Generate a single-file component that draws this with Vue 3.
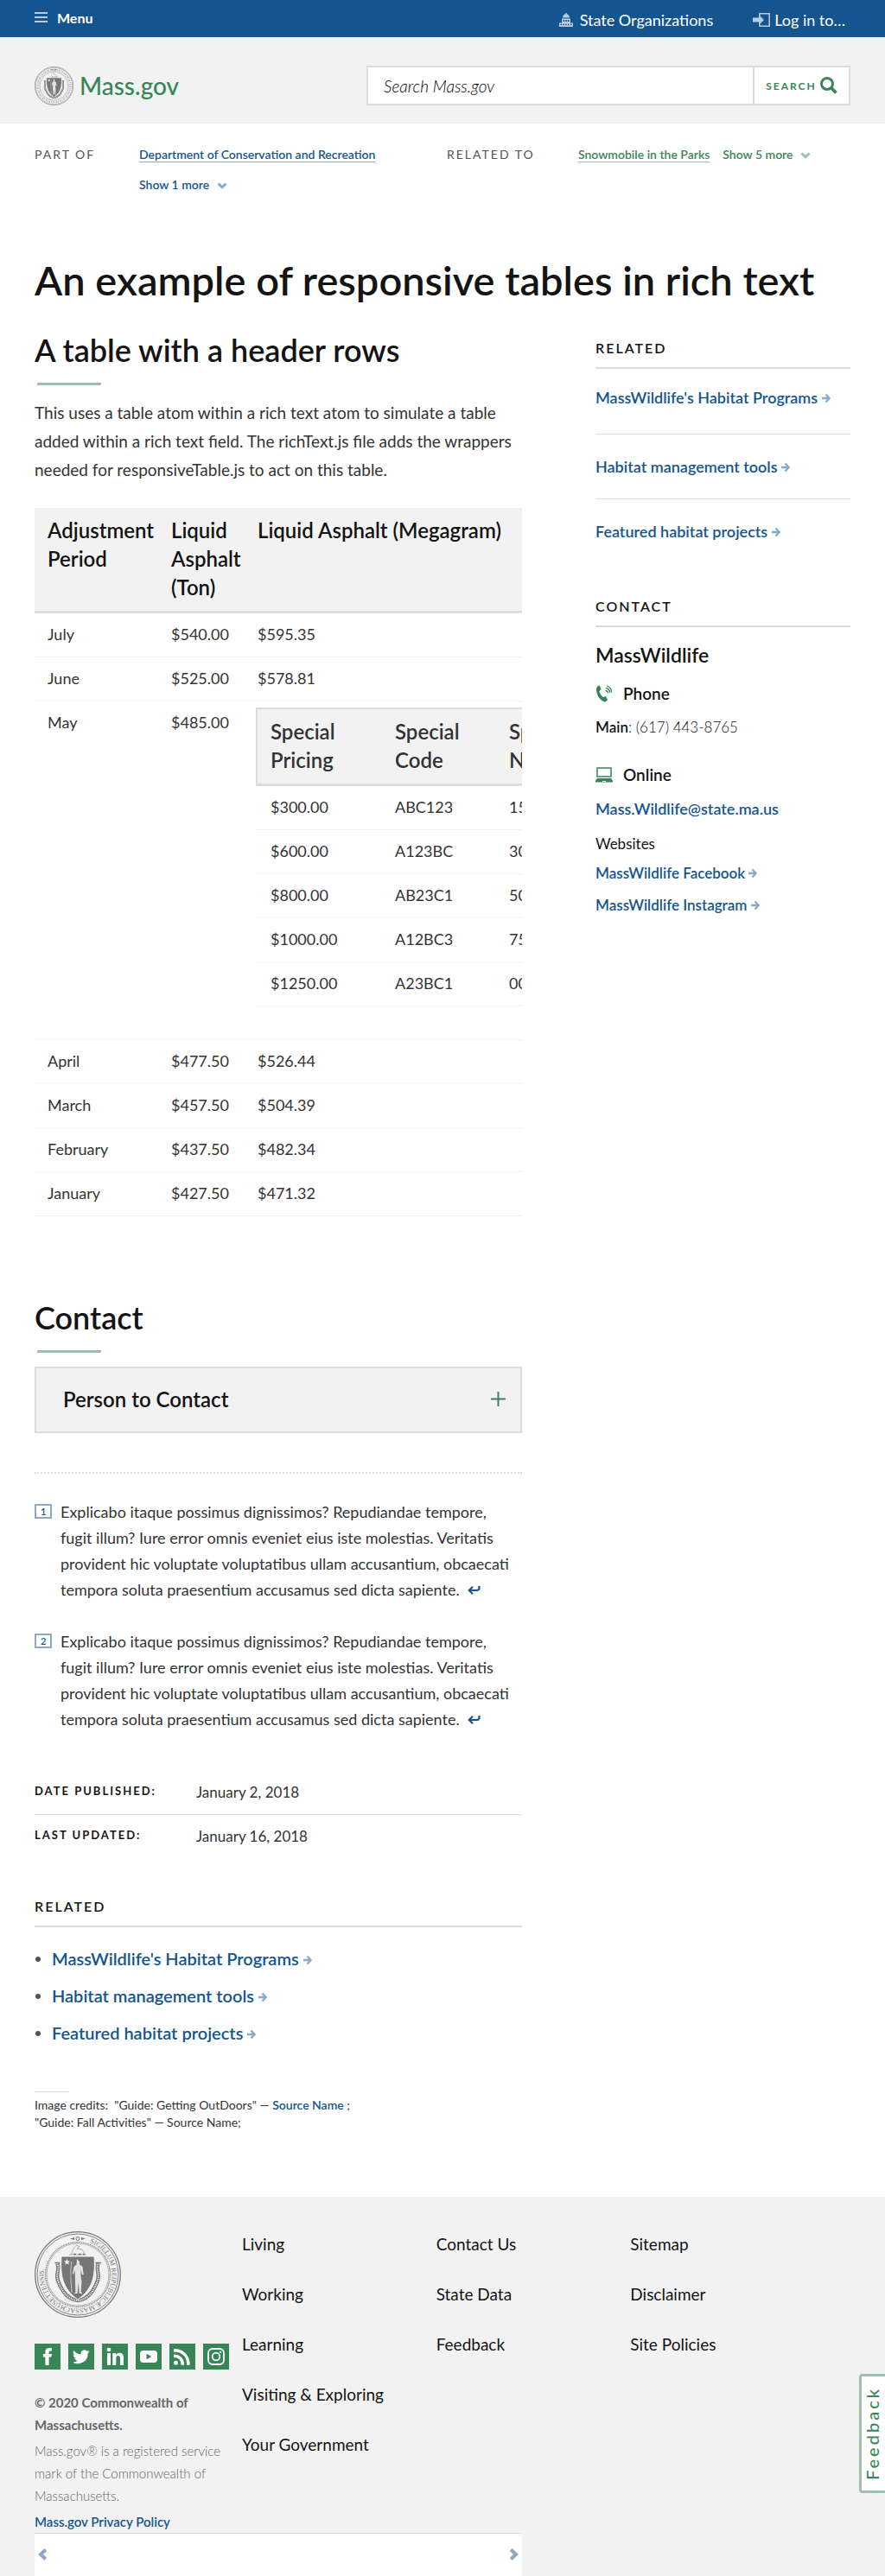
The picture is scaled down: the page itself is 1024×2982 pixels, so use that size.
<script setup>
const relatedLinks = ["MassWildlife's Habitat Programs", 'Habitat management tools', 'Featured habitat projects']
const websites = ['MassWildlife Facebook', 'MassWildlife Instagram']

const rowsBefore = [
  ['July', '$540.00', '$595.35'],
  ['June', '$525.00', '$578.81'],
]
const rowsAfter = [
  ['April', '$477.50', '$526.44'],
  ['March', '$457.50', '$504.39'],
  ['February', '$437.50', '$482.34'],
  ['January', '$427.50', '$471.32'],
]
const specials = [
  ['$300.00', 'ABC123', '15'],
  ['$600.00', 'A123BC', '30'],
  ['$800.00', 'AB23C1', '50'],
  ['$1000.00', 'A12BC3', '75'],
  ['$1250.00', 'A23BC1', '00'],
]
const footnotes = [1, 2]
const footerLinks = [
  ['Living', 'Working', 'Learning', 'Visiting & Exploring', 'Your Government'],
  ['Contact Us', 'State Data', 'Feedback'],
  ['Sitemap', 'Disclaimer', 'Site Policies'],
]
</script>

<template>
  <div class="page">
    <!-- Shared symbols -->
    <svg class="sprite" width="0" height="0" aria-hidden="true">
      <symbol id="seal" viewBox="0 0 100 100">
        <g fill="none" stroke="#777">
          <circle cx="50" cy="50" r="49.3" stroke-width="1.3" />
          <circle cx="50" cy="50" r="47" stroke-width=".9" />
          <circle cx="50" cy="50" r="37.4" stroke-width="1.2" stroke-dasharray="1 .7" />
          <circle cx="50" cy="50" r="36" stroke-width=".5" />
        </g>
        <path d="M41 8.500l5-1.600v3.200zM59 8.500l-5-1.600v3.200z" fill="#777" />
        <circle cx="50" cy="8.500" r="2" fill="none" stroke="#777" stroke-width="1" />
        <path d="M43 27c0-5 3-9 6-11l3 2-3 2c5 0 9 3 9 7M40 27h20" fill="none" stroke="#999" stroke-width=".8" />
        <path d="M45 26.500h3M51 26.500h3M56 26.500h2" stroke="#777" stroke-width="1.400" />
        <path d="M26 37c4 6-2 12 1 20s7 16 14 20c6 4 12 4 18 0 7-4 11-12 14-20s-3-14 1-20" fill="none" stroke="#777" stroke-width="4.400" />
        <path d="M26 37c4 6-2 12 1 20s7 16 14 20c6 4 12 4 18 0 7-4 11-12 14-20s-3-14 1-20" fill="none" stroke="#f2f2f2" stroke-width="2" stroke-dasharray="1.200 1" />
        <path d="M23.500 36.500h6M70.500 36.500h6.500" stroke="#777" stroke-width="1.400" />
        <path d="M31 29h38c1 18 1 36-19 50-20-14-20-32-19-50z" fill="#777" stroke="#f2f2f2" stroke-width="1" />
        <path d="M37.500 32l1 2.300 2.500.2-1.900 1.600.6 2.400-2.200-1.300-2.200 1.300.6-2.400-1.900-1.600 2.500-.2z" fill="#f2f2f2" />
        <path d="M49 32l2 2c1.500 1 1.500 3 .5 4l4 3 1.200 9-1.700.6-1.500-6v7l1 7-.8 12 2 1.500h-4l-.9-13-1.200 13h-4.200l2-1.500-.4-12-.3-14-1.500 5-1.200-.5 1.500-8 3-2.500z" fill="#e4e4e4" />
        <path d="M43 35c-2 8-1 24 0 36" fill="none" stroke="#d8d8d8" stroke-width=".8" />
      </symbol>
      <symbol id="arrow" viewBox="0 0 10 12">
        <path d="M0 6h8M4.500 1.500L8.700 6l-4.200 4.500" fill="none" stroke="currentColor" stroke-width="2.400" />
      </symbol>
      <symbol id="chevron" viewBox="0 0 12 8">
        <path d="M1.500 1.500L6 5.800l4.500-4.300" fill="none" stroke="currentColor" stroke-width="3" />
      </symbol>
    </svg>

    <div class="topbar">
      <button class="menu" type="button">
        <span class="bars" aria-hidden="true"></span>Menu
      </button>
      <nav class="utility" aria-label="Utility">
        <a href="#">
          <svg width="16" height="16" viewBox="0 0 16 16" aria-hidden="true">
            <path d="M7.300 0h1.400v1.300C10.800 1.700 12 3.300 12 5.600H4c0-2.300 1.200-3.900 3.300-4.300zM3 6.400h10v5h3V16H0v-4.600h3z" fill="#b7cce0" />
            <path d="M4.500 8.300h1.800v1.700H4.500zM7.100 8.300h1.800v1.700H7.100zM9.700 8.300h1.800v1.700H9.700zM1.500 12.800h1.500v1.500H1.500zM4.500 12.800h1.500v1.500H4.500zM7.250 12.800h1.500v1.500h-1.500zM10 12.800h1.500v1.500H10zM13 12.800h1.500v1.500H13z" fill="#14558f" />
          </svg>
          State Organizations
        </a>
        <button type="button">
          <svg width="20" height="16" viewBox="0 0 20 16" aria-hidden="true">
            <path d="M8 3V.8h11.200v14.400H8V13" fill="none" stroke="#b7cce0" stroke-width="1.500" />
            <path d="M0 5.500h7V2l6 6-6 6v-3.500H0z" fill="#b7cce0" />
          </svg>
          Log in to…
        </button>
      </nav>
    </div>

    <header class="header">
      <a class="brand" href="#">
        <svg width="45" height="45" viewBox="0 0 100 100" role="img" aria-label="Massachusetts State Seal">
          <use href="#seal" width="100" height="100" />
          <circle cx="50" cy="50" r="42" fill="none" stroke="#777" stroke-opacity=".55" stroke-width="4.500" stroke-dasharray="2.500 3 1.500 2.500" />
        </svg>
        <span>Mass.gov</span>
      </a>
      <form class="search" role="search" @submit.prevent>
        <input type="search" placeholder="Search Mass.gov" aria-label="Search Mass.gov" />
        <button type="submit">
          <span>Search</span>
          <svg width="20" height="20" viewBox="0 0 20 20" fill="none" stroke="#388557" aria-hidden="true">
            <circle cx="8" cy="8" r="6.500" stroke-width="3" />
            <path d="M12.500 12.500l6 6" stroke-width="3.800" />
          </svg>
        </button>
      </form>
    </header>

    <div class="relations">
      <div class="relation">
        <span class="relation-label">Part of</span>
        <div class="relation-links">
          <a href="#">Department of Conservation and Recreation</a>
          <button type="button">Show 1 more <svg width="12" height="8"><use href="#chevron" /></svg></button>
        </div>
      </div>
      <div class="relation green">
        <span class="relation-label">Related to</span>
        <div class="relation-links">
          <a href="#">Snowmobile in the Parks</a>
          <button type="button">Show 5 more <svg width="12" height="8"><use href="#chevron" /></svg></button>
        </div>
      </div>
    </div>

    <h1>An example of responsive tables in rich text</h1>

    <div class="columns">
      <main>
        <section>
          <h2>A table with a header rows</h2>
          <p class="intro">
            This uses a table atom within a rich text atom to simulate a table added within a rich
            text field. The richText.js file adds the wrappers needed for responsiveTable.js to act on this table.
          </p>
          <div class="table-wrap">
            <table class="outer">
              <colgroup><col class="c1" /><col class="c2" /><col /></colgroup>
              <thead>
                <tr><th scope="col">Adjustment Period</th><th scope="col">Liquid Asphalt (Ton)</th><th scope="col">Liquid Asphalt (Megagram)</th></tr>
              </thead>
              <tbody>
                <tr v-for="row in rowsBefore" :key="row[0]"><td v-for="cell in row" :key="cell">{{ cell }}</td></tr>
                <tr>
                  <td>May</td>
                  <td>$485.00</td>
                  <td class="nest">
                    <table class="inner">
                      <colgroup><col class="n1" /><col class="n2" /><col /></colgroup>
                      <thead>
                        <tr><th scope="col">Special Pricing</th><th scope="col">Special Code</th><th scope="col">Special Number</th></tr>
                      </thead>
                      <tbody>
                        <tr v-for="row in specials" :key="row[0]"><td v-for="cell in row" :key="cell">{{ cell }}</td></tr>
                      </tbody>
                    </table>
                  </td>
                </tr>
                <tr v-for="row in rowsAfter" :key="row[0]"><td v-for="cell in row" :key="cell">{{ cell }}</td></tr>
              </tbody>
            </table>
          </div>
        </section>

        <section class="contact">
          <h2>Contact</h2>
          <button class="accordion" type="button" aria-expanded="false">
            Person to Contact
            <svg width="17" height="17" viewBox="0 0 17 17" aria-hidden="true"><path d="M8.500 0v17M0 8.500h17" stroke="#388557" stroke-width="2" /></svg>
          </button>
        </section>

        <ol class="footnotes">
          <li v-for="n in footnotes" :key="n">
            <span class="mark"><a href="#">{{ n }}</a></span>
            <p>
              Explicabo itaque possimus dignissimos? Repudiandae tempore, fugit illum? Iure error omnis
              eveniet eius iste molestias. Veritatis provident hic voluptate voluptatibus ullam
              accusantium, obcaecati tempora soluta praesentium accusamus sed dicta sapiente.
              <a class="back" href="#" aria-label="Back to text">
                <svg width="15" height="12" viewBox="0 0 15 12" aria-hidden="true">
                  <path d="M13.500 1v2.500c0 1.500-1 2.500-2.500 2.500H2M6 1.800L1.800 6 6 10.200" fill="none" stroke="#14558f" stroke-width="2.200" />
                </svg>
              </a>
            </p>
          </li>
        </ol>

        <dl class="dates">
          <div><dt>Date published:</dt><dd>January 2, 2018</dd></div>
          <div><dt>Last updated:</dt><dd>January 16, 2018</dd></div>
        </dl>

        <section class="related-main">
          <h3 class="overline">Related</h3>
          <ul>
            <li v-for="link in relatedLinks" :key="link">
              <a class="go" href="#">{{ link }} <svg width="10" height="12"><use href="#arrow" /></svg></a>
            </li>
          </ul>
        </section>

        <div class="credits">
          Image credits:&nbsp; "Guide: Getting OutDoors" — <a href="#">Source Name</a> ;<br />
          "Guide: Fall Activities" — Source Name;
        </div>
      </main>

      <aside>
        <section>
          <h3 class="overline">Related</h3>
          <ul class="side-links">
            <li v-for="link in relatedLinks" :key="link">
              <a class="go" href="#">{{ link }} <svg width="10" height="12"><use href="#arrow" /></svg></a>
            </li>
          </ul>
        </section>
        <section class="side-contact">
          <h3 class="overline">Contact</h3>
          <h4>MassWildlife</h4>
          <h5>
            <svg width="20" height="20" viewBox="0 0 20 20" aria-hidden="true">
              <path d="M4.800.3L6.500 5 4.300 7.300c.8 2.800 2.500 5.200 4.700 6.800l2.800-1.200 2.400 4.300-3 2.500C5.500 18.500 1 11.500 1 5.500 1 3 2.500.8 4.800.3z" fill="#388557" />
              <path d="M11.500 6.500c1.800 0 2.800 1 3 3M12 3.500c3 .5 4.500 2.500 4.700 5.500M13 1c3.500 1 5.500 4 5.600 7.500" fill="none" stroke="#388557" stroke-width="1.300" />
            </svg>
            Phone
          </h5>
          <p class="phone"><b>Main</b>: (617) 443-8765</p>
          <h5>
            <svg width="20" height="18" viewBox="0 0 20 18" aria-hidden="true">
              <path d="M2 1h16v10H2z" fill="none" stroke="#388557" stroke-width="1.500" />
              <path d="M1.800 13h16.400l1.800 3v1.500H0V16zM8 16v1h4v-1z" fill="#388557" fill-rule="evenodd" />
            </svg>
            Online
          </h5>
          <p class="mail"><a href="#">Mass.Wildlife@state.ma.us</a></p>
          <p class="websites">Websites</p>
          <ul>
            <li v-for="site in websites" :key="site">
              <a class="go" href="#">{{ site }} <svg width="10" height="12"><use href="#arrow" /></svg></a>
            </li>
          </ul>
        </section>
      </aside>
    </div>

    <footer>
      <div class="about">
        <svg class="big-seal" width="100" height="100" viewBox="0 0 100 100" role="img" aria-label="Massachusetts State Seal">
          <use href="#seal" width="100" height="100" />
          <path id="seal-ring" d="M50 10.500a39.500 39.500 0 0 1 0 79a39.500 39.500 0 0 1 0-79" fill="none" />
          <text font-family="Liberation Serif, serif" font-size="8" fill="#777">
            <textPath href="#seal-ring" startOffset="14">SIGILLUM REIPUBLICÆ MASSACHUSETTENSIS.</textPath>
          </text>
        </svg>
        <div class="social">
          <a href="#" aria-label="Facebook">
            <svg viewBox="0 0 30 30"><path d="M12.400 25v-9.500H9.800v-3.600h2.600V9.500C12.400 6.500 14 5 17 5h3v3.500h-1.900c-1.200 0-1.500.5-1.500 1.500v1.900h3.300l-.5 3.600h-2.800V25z" fill="#fff" /></svg>
          </a>
          <a href="#" aria-label="Twitter">
            <svg viewBox="0 0 24 24"><path d="M19.900 7.400c-.6.300-1.200.4-1.900.5.700-.4 1.200-1 1.400-1.800-.6.400-1.300.6-2.100.8a3.200 3.200 0 0 0-5.500 2.900A9.200 9.200 0 0 1 5.100 6.400a3.200 3.200 0 0 0 1 4.300c-.5 0-1-.2-1.500-.4 0 1.600 1.100 2.900 2.600 3.200-.5.100-1 .2-1.500.1.400 1.300 1.600 2.200 3 2.200A6.500 6.500 0 0 1 4 17.100a9.200 9.200 0 0 0 14.100-8.200c.7-.4 1.300-.9 1.800-1.500z" fill="#fff" /></svg>
          </a>
          <a href="#" aria-label="LinkedIn">
            <svg viewBox="0 0 30 30" fill="#fff"><circle cx="8" cy="7" r="2.300" /><path d="M6 11h4v14H6zM12.300 11h3.800v2c1-1.600 2.300-2.300 4.200-2.300 3.400 0 4.700 2.200 4.700 5.800V25h-4v-7.600c0-2-.5-3.300-2.200-3.300-1.800 0-2.500 1.300-2.500 3.300V25h-4z" /></svg>
          </a>
          <a href="#" aria-label="YouTube">
            <svg viewBox="0 0 30 30"><rect x="5" y="8" width="20" height="14" rx="4" fill="#fff" /><path d="M12.500 11.700v6.600l6-3.300z" fill="#388557" /></svg>
          </a>
          <a href="#" aria-label="RSS">
            <svg viewBox="0 0 30 30"><circle cx="7.500" cy="22.300" r="2.500" fill="#fff" /><path d="M5 14.200c6.500 0 10.300 4 10.300 10.600M5 7.800c10.500 0 17 6.500 17 17" fill="none" stroke="#fff" stroke-width="3.500" /></svg>
          </a>
          <a href="#" aria-label="Instagram">
            <svg viewBox="0 0 30 30" fill="none" stroke="#fff" stroke-width="1.800"><rect x="6" y="6" width="18" height="18" rx="5" /><circle cx="15" cy="15" r="4.300" /><circle cx="20.200" cy="9.800" r="1.100" fill="#fff" stroke="none" /></svg>
          </a>
        </div>
        <p class="copyright">© 2020 Commonwealth of Massachusetts.</p>
        <p>Mass.gov® is a registered service mark of the Commonwealth of Massachusetts.</p>
        <p><a href="#">Mass.gov Privacy Policy</a></p>
      </div>
      <ul v-for="(group, i) in footerLinks" :key="i">
        <li v-for="link in group" :key="link"><a href="#">{{ link }}</a></li>
      </ul>
    </footer>

    <div class="scroll-dock">
      <div class="scroller">
        <button type="button" aria-label="Scroll table left">
          <svg width="11" height="14" viewBox="0 0 11 14"><path d="M8.800 1.500L3 7l5.800 5.500" fill="none" stroke="#8aaac7" stroke-width="4" /></svg>
        </button>
        <button type="button" aria-label="Scroll table right">
          <svg width="11" height="14" viewBox="0 0 11 14"><path d="M2.200 1.500L8 7l-5.800 5.500" fill="none" stroke="#8aaac7" stroke-width="4" /></svg>
        </button>
      </div>
    </div>
    <button class="feedback" type="button"><span>Feedback</span></button>
  </div>
</template>

<style>
body {
  background: #fff;
}
</style>

<style scoped>
.page {
  font-family: Lato, 'Open Sans', sans-serif;
  font-size: 17px;
  font-weight: 300;
  color: #141414;
  overflow-x: hidden;
}
.page *,
.page *::before {
  box-sizing: border-box;
}
.sprite {
  position: absolute;
}
h1, h2, h3, h4, h5, p, ul, ol, dl, dd {
  margin: 0;
  padding: 0;
}
ul, ol {
  list-style: none;
}
button {
  margin: 0;
  padding: 0;
  border: 0;
  background: none;
  font: inherit;
  color: inherit;
  cursor: pointer;
}
a {
  color: #14558f;
  font-weight: 600;
  text-decoration: none;
}

/* Top bar */
.topbar {
  display: flex;
  justify-content: space-between;
  height: 43px;
  padding: 0 46px 0 40px;
  background: #14558f;
  color: #fff;
}
.menu {
  display: flex;
  align-items: center;
  gap: 11px;
  height: 40px;
  font-size: 16px;
  font-weight: 700;
}
.bars {
  width: 15px;
  height: 12px;
  border-top: 2px solid #b7cce0;
  border-bottom: 2px solid #b7cce0;
  background: linear-gradient(#b7cce0, #b7cce0) center / 100% 2px no-repeat;
}
.utility {
  display: flex;
  gap: 46px;
}
.utility a,
.utility button {
  display: flex;
  align-items: center;
  gap: 8px;
  height: 46px;
  font-size: 18px;
  font-weight: 400;
  color: #fff;
}
.utility button {
  gap: 5px;
}

/* Header */
.header {
  display: flex;
  justify-content: space-between;
  align-items: center;
  height: 100px;
  padding: 0 40px;
  background: #f2f2f2;
}
.brand {
  display: flex;
  align-items: center;
  gap: 7px;
  padding-top: 12px;
  font-size: 28px;
  font-weight: 500;
  color: #388557;
}
.search {
  display: flex;
  width: 560px;
  height: 46px;
  margin-top: 12px;
  border: 2px solid #dcdcdc;
  background: #fff;
}
.search input {
  flex: 1;
  min-width: 0;
  padding: 0 18px;
  border: 0;
  background: none;
  font: italic 300 19px Lato, 'Open Sans', sans-serif;
  color: #141414;
}
.search input::placeholder {
  color: #000;
  opacity: 1;
}
.search button {
  display: flex;
  align-items: center;
  justify-content: center;
  gap: 4px;
  width: 111px;
  border-left: 2px solid #dcdcdc;
  font-size: 12px;
  font-weight: 700;
  letter-spacing: 2px;
  text-transform: uppercase;
  color: #388557;
}

/* Relationship links */
.relations {
  display: grid;
  grid-template-columns: 1fr 1fr;
  gap: 10px;
  padding: 0 40px;
  margin-top: 26px;
}
.relation {
  display: flex;
  align-items: flex-start;
  font-size: 14px;
  line-height: 20px;
  color: #14558f;
}
.relation-label {
  flex: none;
  width: 121px;
  letter-spacing: 2px;
  font-weight: 400;
  text-transform: uppercase;
  color: #535353;
}
.green .relation-label {
  width: 152px;
}
.relation-links {
  display: flex;
  flex-wrap: wrap;
  gap: 15px;
}
.relation a {
  text-decoration: underline 1px #8aaac7;
  text-underline-offset: 3px;
  text-decoration-skip-ink: none;
}
.relation button {
  font-weight: 600;
}
.relation button svg {
  margin-left: 5px;
  color: #8aaac7;
}
.green,
.green a {
  color: #388557;
}
.green a {
  text-decoration-color: #9cc3aa;
}
.green button svg {
  color: #9cc3aa;
}

/* Headings and layout */
h1 {
  margin: 75px 40px 36px;
  font-size: 47px;
  font-weight: 600;
  line-height: 50px;
}
.columns {
  display: grid;
  grid-template-columns: 564fr 295fr;
  gap: 85px;
  padding: 0 40px;
}
main {
  min-width: 0;
  font-weight: 400;
}
h2 {
  font-size: 36px;
  font-weight: 600;
  line-height: 40px;
}
h2::after {
  content: '';
  display: block;
  width: 74px;
  height: 3px;
  margin: 18px 0 0 3px;
  background: #9cc3aa;
  transform: skewX(-20deg);
}
main p,
td,
dd,
.credits {
  color: #333;
}
.intro {
  margin: 15px 0 28px;
  font-size: 19px;
  line-height: 33px;
}
.overline {
  padding-bottom: 12px;
  border-bottom: 2px solid #dcdcdc;
  font-size: 16px;
  font-weight: 600;
  line-height: 20px;
  letter-spacing: 2px;
  text-transform: uppercase;
}
.go svg {
  color: #8aaac7;
}

/* Tables */
.table-wrap {
  overflow: hidden;
}
table {
  border-spacing: 0;
  table-layout: fixed;
  text-align: left;
}
.outer {
  width: 700px;
}
.c1 {
  width: 158px;
}
.c2 {
  width: 100px;
}
.n1 {
  width: 161px;
}
.n2 {
  width: 132px;
}
th {
  padding: 9px 0 11px;
  background: #f2f2f2;
  border-bottom: 3px solid #dcdcdc;
  font-size: 24px;
  font-weight: 600;
  line-height: 33px;
  vertical-align: top;
}
td {
  padding: 9px 0 11px;
  border-bottom: 1px solid #f2f2f2;
  font-size: 18px;
  line-height: 30px;
  vertical-align: top;
}
th:first-child,
td:first-child {
  padding-left: 15px;
}
.nest {
  padding: 7px 0 38px;
}
.inner {
  width: 446px;
  margin-left: -2px;
}
.inner th {
  padding-right: 40px;
  border-top: 2px solid #dcdcdc;
}
.inner th:first-child {
  border-left: 2px solid #dcdcdc;
}
.inner tr td:first-child {
  padding-left: 17px;
}

/* Contact accordion */
.contact {
  margin-top: 97px;
}
.accordion {
  display: flex;
  justify-content: space-between;
  align-items: center;
  width: 100%;
  height: 77px;
  margin-top: 16px;
  padding: 0 17px 2px 31px;
  background: #f2f2f2;
  border: 2px solid #dcdcdc;
  font-size: 24px;
  font-weight: 600;
}

/* Footnotes */
.footnotes {
  display: grid;
  gap: 30px;
  margin-top: 45px;
  padding-top: 29px;
  border-top: 2px dotted #dcdcdc;
}
.footnotes li {
  display: grid;
  grid-template-columns: 30px 1fr;
  padding-right: 8px;
  font-size: 18px;
  line-height: 30px;
}
.mark a {
  display: inline-block;
  padding: 0 5px;
  margin-top: 6px;
  border: 2px solid #8aaac7;
  font-size: 11px;
  line-height: 13px;
  vertical-align: top;
}
.back {
  margin-left: 5px;
}

/* Dates */
.dates {
  margin-top: 45px;
}
.dates div {
  display: grid;
  grid-template-columns: 187px 1fr;
  padding: 10px 0;
}
.dates div + div {
  border-top: 1px solid #dcdcdc;
}
.dates dt {
  font-size: 13px;
  font-weight: 700;
  line-height: 26px;
  letter-spacing: 2px;
  text-transform: uppercase;
}
.dates dd {
  line-height: 30px;
}

/* Related list */
.related-main {
  margin-top: 46px;
}
.related-main ul {
  display: grid;
  gap: 10px;
  margin-top: 20px;
}
.related-main li {
  display: flex;
  align-items: center;
  gap: 13px;
  font-size: 20px;
  line-height: 33px;
}
.related-main li::before {
  content: '';
  width: 6px;
  height: 6px;
  margin-left: 1px;
  border-radius: 50%;
  background: #535353;
}
.credits {
  margin: 51px 0 76px;
  font-size: 14px;
  line-height: 20px;
}
.credits::before {
  content: '';
  display: block;
  width: 40px;
  height: 1px;
  margin-bottom: 5px;
  background: #dcdcdc;
}

/* Sidebar */
aside {
  padding-top: 8px;
}
.side-links li {
  padding: 22px 0;
  font-size: 18px;
  line-height: 30px;
}
.side-links li:first-child {
  padding: 18px 0 27px;
}
.side-links li + li {
  border-top: 1px solid #dcdcdc;
}
.side-contact {
  margin-top: 40px;
  line-height: 26px;
}
h4 {
  margin: 17px 0 15px;
  font-size: 23px;
  font-weight: 600;
  line-height: 30px;
}
h5 {
  display: flex;
  align-items: center;
  gap: 12px;
  margin-bottom: 11px;
  font-size: 19px;
  font-weight: 600;
  line-height: 30px;
}
.phone {
  margin-bottom: 27px;
}
.phone b {
  font-weight: 600;
}
.mail {
  font-size: 18px;
}
.websites {
  margin: 15px 0 8px;
  font-weight: 400;
}
.side-contact ul {
  display: grid;
  gap: 11px;
}

/* Footer */
footer {
  display: grid;
  grid-template-columns: 240px repeat(3, 1fr);
  padding: 40px 70px 50px 40px;
  background: #f2f2f2;
}
.about {
  padding-right: 5px;
  font-size: 15px;
  line-height: 26px;
  color: #666;
}
.big-seal {
  display: block;
}
.social {
  display: flex;
  gap: 9px;
  margin: 30px 0 25px;
}
.social a {
  flex: none;
  width: 30px;
  height: 30px;
  background: #388557;
}
.social svg {
  display: block;
}
.about p + p {
  margin-top: 4px;
}
.copyright {
  font-weight: 700;
  color: #666;
}
footer ul {
  display: grid;
  gap: 28px;
  align-content: start;
}
footer li {
  font-size: 19px;
  line-height: 30px;
}
footer li a {
  font-weight: 400;
  color: #141414;
}

/* Floating controls */
.scroll-dock {
  position: fixed;
  right: 0;
  bottom: 0;
  left: 0;
  display: grid;
  grid-template-columns: 564fr 295fr;
  gap: 85px;
  padding: 0 40px;
  pointer-events: none;
}
.scroller {
  display: flex;
  justify-content: space-between;
  height: 50px;
  padding: 0 4px;
  border-top: 1px solid #dcdcdc;
  background: #fff;
  pointer-events: auto;
}
.feedback {
  position: fixed;
  right: 0;
  bottom: 96px;
  width: 30px;
  height: 138px;
  border: 3px solid #9cc3aa;
  border-right: 0;
  border-radius: 4px 0 0 4px;
  background: #fff;
  font-size: 20px;
  font-weight: 500;
  letter-spacing: 3px;
  color: #388557;
}
.feedback span {
  display: block;
  line-height: 24px;
  text-align: center;
  writing-mode: vertical-rl;
  transform: rotate(180deg);
}
</style>
